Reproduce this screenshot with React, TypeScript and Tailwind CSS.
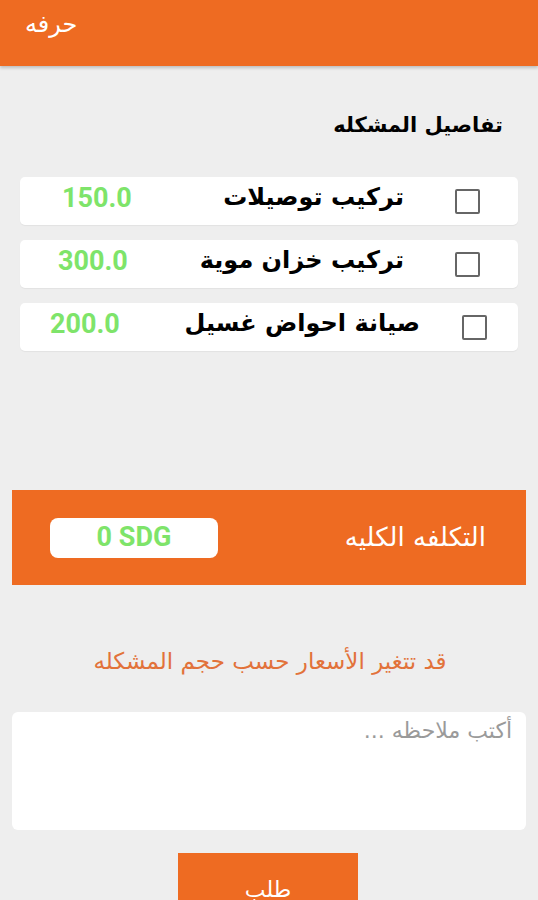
const items = [
  { name: 'تركيب توصيلات', price: '150.0', box: 'mr-[38px]', gap: 'mr-[51px]', left: 'ml-[42px]' },
  { name: 'تركيب خزان موية', price: '300.0', box: 'mr-[38px]', gap: 'mr-[51px]', left: 'ml-[38px]' },
  { name: 'صيانة احواض غسيل', price: '200.0', box: 'mr-[31px]', gap: 'mr-[42px]', left: 'ml-[30px]' },
];

export default function App() {
  return (
    <div className="w-[538px] h-[900px] overflow-hidden bg-[#eeeeee] font-['DejaVu_Sans',sans-serif]">
      <div className="h-[66px] bg-[#ee6b22] shadow-[0_2px_3px_rgba(0,0,0,0.2)] flex items-center px-[25px]">
        <span className="text-white text-[24px] -mt-[18px]">حرفه</span>
      </div>

      <div dir="rtl" className="px-[20px] pt-[44px]">
        <h2 className="pr-[15px] h-[30px] text-[21px] font-bold text-black">تفاصيل المشكله</h2>

        <div className="mt-[37px] flex flex-col gap-[15px]">
          {items.map((it) => (
            <div key={it.name} className="h-[48px] bg-white rounded-[5px] flex items-center shadow-[0_1px_1px_rgba(0,0,0,0.05)]">
              <div className={`w-[25px] h-[25px] border-2 border-[#666] rounded-[2px] shrink-0 ${it.box}`} />
              <span className={`-mt-[8px] text-[24px] text-black font-bold whitespace-nowrap ${it.gap}`}>{it.name}</span>
              <span className={`-mt-[6px] mr-auto text-[27px] font-bold text-[#7ee46a] font-['Roboto',sans-serif] ${it.left}`}>
                {it.price}
              </span>
            </div>
          ))}
        </div>
      </div>

      <div dir="rtl" className="mx-[12px] mt-[139px] h-[95px] bg-[#ee6b22] flex items-center pr-[40px] pl-[38px] justify-between">
        <span className="text-white text-[26px]">التكلفه الكليه</span>
        <div dir="ltr" className="w-[168px] h-[40px] bg-white rounded-[8px] flex items-center justify-center">
          <span className="text-[27px] font-bold text-[#7ee46a] font-['Roboto',sans-serif]">0 SDG</span>
        </div>
      </div>

      <div className="h-[127px] flex items-center justify-center pt-[26px]">
        <p dir="rtl" className="text-center text-[23px] text-[#e2723a] pl-[2px]">
          قد تتغير الأسعار حسب حجم المشكله
        </p>
      </div>

      <div className="mx-[12px] h-[118px] bg-white rounded-[6px]">
        <textarea
          dir="rtl"
          placeholder="أكتب ملاحظه ..."
          className="w-full h-full resize-none bg-transparent pr-[14px] pt-[2px] text-[22px] placeholder:text-[#9a9a9a] outline-none"
        />
      </div>

      <div className="mt-[23px] flex justify-center">
        <button type="button" className="w-[180px] h-[60px] bg-[#ee6b22] text-white text-[22px] pt-[12px] ml-[-2px]">
          طلب
        </button>
      </div>
    </div>
  );
}
